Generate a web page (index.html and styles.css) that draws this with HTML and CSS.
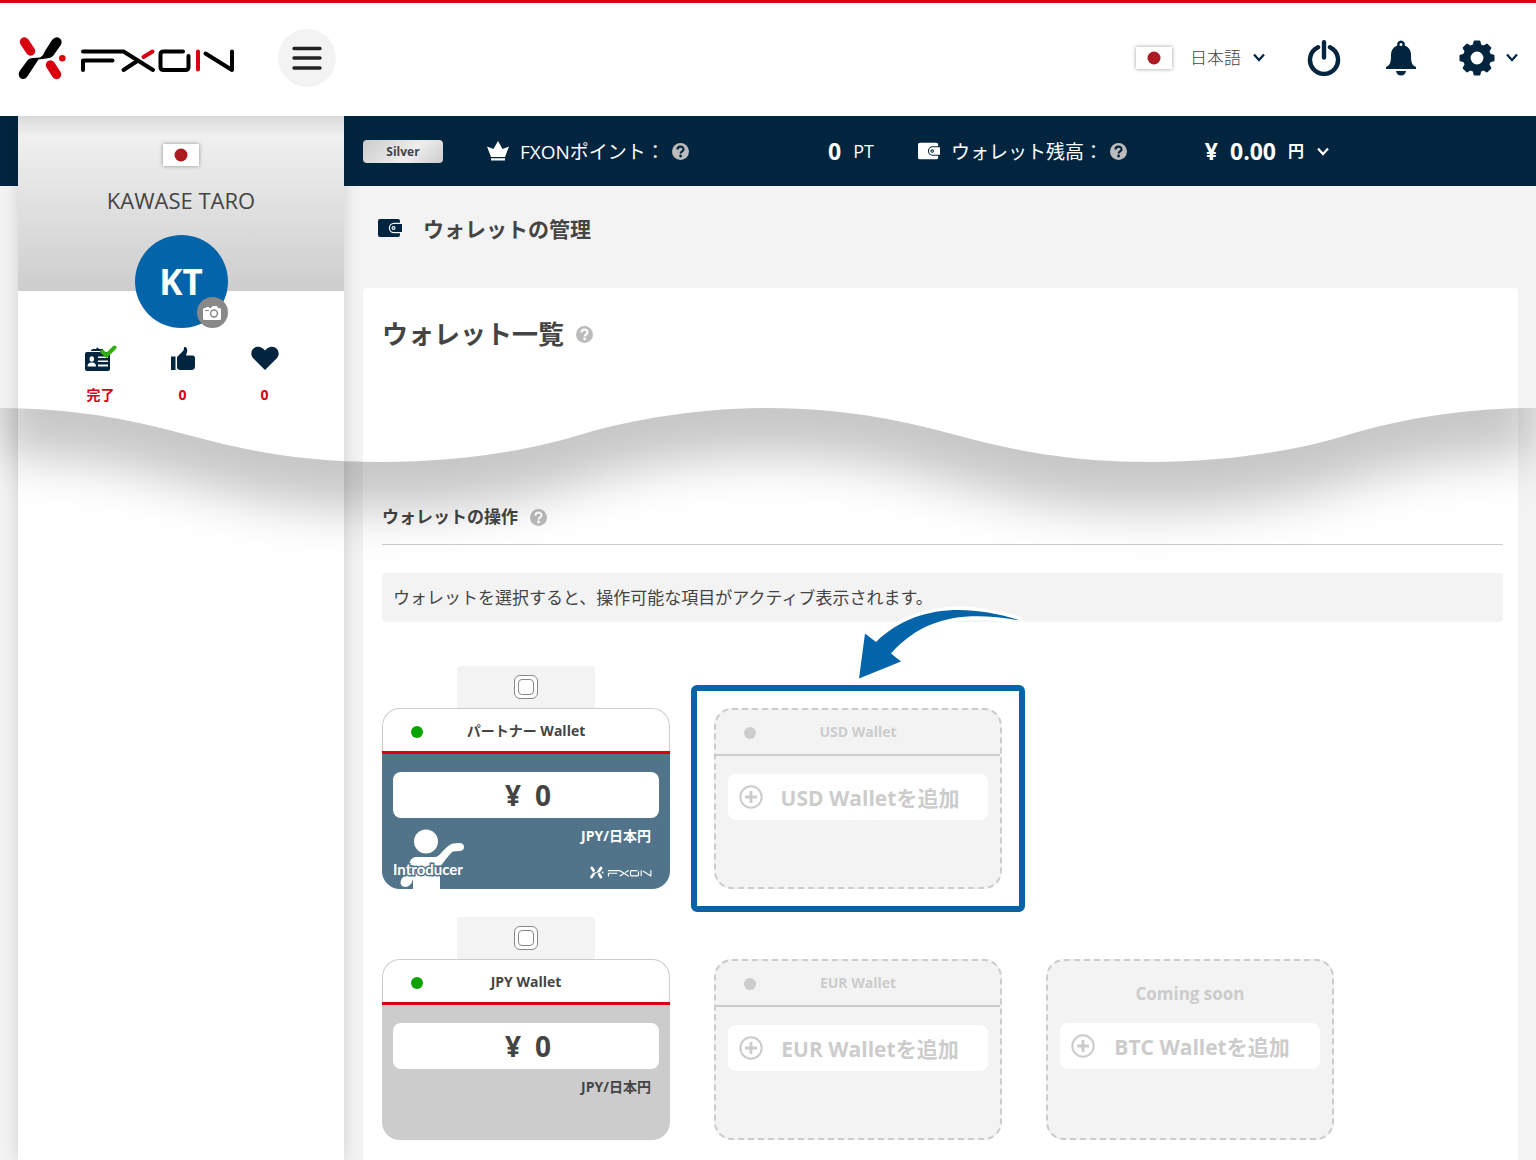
FILE: index.html
```html
<!DOCTYPE html>
<html lang="ja">
<head>
<meta charset="utf-8">
<meta name="viewport" content="width=device-width, initial-scale=1">
<title>ウォレットの管理 | FXON</title>
<link rel="stylesheet" href="styles.css">
</head>
<body>
<svg class="defs" width="0" height="0" aria-hidden="true">
  <symbol id="chevron" viewBox="0 0 12 9"><path d="M1 1.5 6 7 11 1.5" fill="none" stroke="currentColor" stroke-width="2.2"/></symbol>
  <symbol id="help" viewBox="0 0 17 17"><circle cx="8.500" cy="8.500" r="8.500" fill="currentColor"/><path d="M5.500 6.600C5.500 2.600 11.500 2.600 11.500 6.400 11.500 8.600 8.600 8.300 8.600 10.600" fill="none" stroke="var(--help-mark)" stroke-width="2.200"/><circle cx="8.600" cy="13" r="1.400" fill="var(--help-mark)"/></symbol>
  <symbol id="wallet" viewBox="0 0 24 18"><path d="M2 0H20Q22 0 22 2V3.800H16A5.200 5.200 0 0 0 16 14.200H22V16Q22 18 20 18H2Q0 18 0 16V2Q0 0 2 0Z" fill="currentColor"/><path d="M16 5H24V13H16A4 4 0 0 1 16 5Z" fill="currentColor"/><circle cx="15.500" cy="9" r="2" fill="var(--wallet-mark)"/><circle cx="15.500" cy="9" r="0.800" fill="currentColor"/></symbol>
  <symbol id="plus" viewBox="0 0 24 24"><circle cx="12" cy="12" r="10.700" fill="none" stroke="currentColor" stroke-width="2"/><path d="M12 6V18M6 12H18" stroke="currentColor" stroke-width="2.800"/></symbol>
  <symbol id="flag" viewBox="0 0 36 22"><path fill="#fff" d="M0 0H36V22H0Z"/><circle cx="18" cy="11" r="6.500" fill="#ad1a20"/></symbol>
  <symbol id="fxon" viewBox="18 36 218 44">
    <path d="M52 40Q56 35.500 60 38.500 63 41.500 60.500 45.500L53 56Q51 58 48 58.300L38.500 59.500 28 75.500Q25 80.500 21 78.500 17 75.500 20 70.500L27 61Q29 58 33 58L40 57.500Q43 56 45 51Z" fill="var(--logo-dark)"/>
    <g fill="none" stroke="var(--logo-accent)" stroke-linecap="round"><path d="M24.500 42 30.500 51M50.500 65 56.500 74.500" stroke-width="9.400"/><path d="M143.500 57 152.500 51.500M198 51.500V69.500" stroke-width="4"/></g>
    <circle cx="62.300" cy="58.200" r="3.300" fill="var(--logo-accent)"/>
    <path d="M83 51.500H123.500L153 70M83 70V60.500H112.500M123.500 70 138 60.500M183 51.500H163.500Q160.500 51.500 160.500 54.500V67Q160.500 70 163.500 70H185.500Q188.500 70 188.500 67V56M205.500 53.500 232 70V51.500" fill="none" stroke="var(--logo-dark)" stroke-width="4" stroke-linecap="round" stroke-linejoin="round"/>
  </symbol>
</svg>

<header class="topbar">
  <a class="logo" href="#" aria-label="FXON"><svg width="218" height="44"><use href="#fxon"/></svg></a>
  <button class="menu" type="button" aria-label="メニュー"><svg width="30" height="26" viewBox="0 0 30 26"><path d="M2 3.500H28M2 13H28M2 23H28" stroke="#222" stroke-width="3.400" stroke-linecap="round"/></svg></button>
  <div class="language">
    <svg class="flag" width="36" height="22"><use href="#flag"/></svg>
    <label class="pick"><select aria-label="言語"><option>日本語</option></select><svg width="12" height="9"><use href="#chevron"/></svg></label>
  </div>
  <button class="icon-button power" type="button" aria-label="ログアウト"><svg width="34" height="36" viewBox="0 0 34 36"><path d="M11 7.200A14 14 0 1 0 23 7.200M17 2.200V17.500" fill="none" stroke="currentColor" stroke-width="4.400" stroke-linecap="round"/></svg></button>
  <button class="icon-button bell" type="button" aria-label="お知らせ"><svg width="30" height="36" viewBox="0 0 30 36"><path fill-rule="evenodd" d="M15 0.500A4 4 0 0 1 18.800 5.500Q25 8 25 15C25 23 26 25 30 27V29H0V27C4 25 5 23 5 15Q5 8 11.200 5.500A4 4 0 0 1 15 0.500ZM15 3A1.500 1.500 0 1 0 15 6 1.500 1.500 0 0 0 15 3Z" fill="currentColor"/><path d="M10 31H20Q19 35.500 15 35.500T10 31Z" fill="currentColor"/></svg></button>
  <button class="icon-button settings" type="button" aria-label="設定"><svg width="36" height="36" viewBox="-18 -18 36 36"><circle r="10.200" fill="none" stroke="currentColor" stroke-width="7.600"/><g stroke="currentColor" stroke-linejoin="round"><path id="tooth" d="M-3.500 -12-2.400 -16.500H2.400L3.500 -12Z" fill="currentColor" stroke-width="2"/><use href="#tooth" transform="rotate(45)"/><use href="#tooth" transform="rotate(90)"/><use href="#tooth" transform="rotate(135)"/><use href="#tooth" transform="rotate(180)"/><use href="#tooth" transform="rotate(225)"/><use href="#tooth" transform="rotate(270)"/><use href="#tooth" transform="rotate(315)"/></g></svg><svg width="12" height="9"><use href="#chevron"/></svg></button>
</header>

<div class="page">
  <aside class="sidebar">
    <div class="profile">
      <svg class="flag" width="36" height="22"><use href="#flag"/></svg>
      <p class="name">KAWASE TARO</p>
      <div class="avatar">KT
        <button class="camera" type="button" aria-label="写真を変更"><svg width="18" height="14" viewBox="0 0 18 14"><path d="M1.500 2H3V1H6V2H8L9.500 0H14L15 2H16.500Q18 2 18 3.500V12.500Q18 14 16.500 14H1.500Q0 14 0 12.500V3.500Q0 2 1.500 2Z" fill="#fff"/><circle cx="11" cy="7.500" r="3.400" fill="none" stroke="#888" stroke-width="1.500"/><path d="M2 4.500H6" stroke="#888"/></svg></button>
      </div>
    </div>
    <ul class="stats">
      <li><svg width="32" height="28" viewBox="0 0 32 28"><path d="M2 7H23Q25 7 25 9V24Q25 26 23 26H2Q0 26 0 24V9Q0 7 2 7ZM6 5 8 4H11Q12.500 1 14 4H18V6H6Z" fill="#01253f"/><g fill="#fff"><ellipse cx="6.800" cy="14" rx="2.200" ry="2.700"/><path d="M2.500 21.500Q2.500 17.500 6.800 17.500T11 21.500ZM13 11.500H23V13H13ZM13 15.500H23V17H13ZM13 19.500H23V21.500H13Z"/></g><path d="M17 6.500 21.500 10.500 29.500 2.500" fill="none" stroke="#33ad11" stroke-width="4" stroke-linecap="round"/></svg><span>完了</span></li>
      <li><svg width="24" height="28" viewBox="0 0 24 28"><path d="M0 11.500H4.500V25H0ZM6 12 12 6Q13 5 13 2.500C15 1 17 4 16 7L15 10.500H21.500Q24 10.500 24 13V21.500Q24 25 20 25H9Q7 25 6 23Z" fill="#01253f"/></svg><span>0</span></li>
      <li><svg width="28" height="28" viewBox="0 0 28 28"><path d="M14 25 2 13C-3 7 4-2 12 3.500L14 5.500 16 3.500C24-2 31 7 26 13Z" fill="#01253f"/></svg><span>0</span></li>
    </ul>
  </aside>

  <main class="main">
    <section class="status">
      <span class="rank">Silver</span>
      <div class="status-group points">
        <svg class="crown" width="22" height="20" viewBox="0 0 22 20"><path d="M0 5.500 6.500 8 11 0 15.500 8 22 5.500 18 16H4ZM4 17.300H18V19.500H4Z" fill="currentColor"/></svg>
        <span class="status-label">FXONポイント：</span>
        <svg class="help" width="17" height="17"><use href="#help"/></svg>
        <span class="figure"><b>0</b><span class="unit">PT</span></span>
      </div>
      <div class="status-group balance">
        <svg class="wallet" width="22" height="18"><use href="#wallet"/></svg>
        <span class="status-label">ウォレット残高：</span>
        <svg class="help" width="17" height="17"><use href="#help"/></svg>
        <span class="figure"><b>¥</b><b>0.00</b><label class="pick"><select aria-label="通貨"><option>円</option></select><svg width="12" height="9"><use href="#chevron"/></svg></label></span>
      </div>
    </section>

    <h1 class="page-title"><svg width="24" height="18"><use href="#wallet"/></svg>ウォレットの管理</h1>

    <section class="panel">
      <h2 class="panel-title">ウォレット一覧<svg class="help" width="17" height="17"><use href="#help"/></svg></h2>
      <h3 class="section-title">ウォレットの操作<svg class="help" width="17" height="17"><use href="#help"/></svg></h3>
      <p class="notice">ウォレットを選択すると、操作可能な項目がアクティブ表示されます。</p>

      <div class="wallets">
        <article class="slot">
          <div class="tab"><input type="checkbox" id="pick-partner"></div>
          <div class="card partner">
            <label class="card-head" for="pick-partner">パートナー Wallet</label>
            <div class="card-body">
              <p class="amount"><span>¥</span><span>0</span></p>
              <p class="currency">JPY/日本円</p>
              <div class="card-foot">
                <svg width="72" height="60" viewBox="0 0 72 60" role="img" aria-label="Introducer"><circle cx="33" cy="12.500" r="12" fill="#fff"/><path d="M22 28H42Q45 28 49 23 56 15 60 14.500L66 14Q71 14 71 18T66 22L60 22.500Q58 23 47 38V60H20V50Q18 58 12 58 6 57 8 51 16 40 16 36 17 29 22 28Z" fill="#fff"/><text class="introducer" x="0" y="46">Introducer</text></svg>
                <svg class="mini-logo" width="62" height="13"><use href="#fxon"/></svg>
              </div>
            </div>
          </div>
        </article>
        <article class="slot">
          <div class="card ghost marked">
            <h4 class="card-head">USD Wallet</h4>
            <button class="add" type="button"><svg width="24" height="24"><use href="#plus"/></svg><span>USD Walletを追加</span></button>
            <svg class="arrow" width="180" height="88" viewBox="850 600 180 88" aria-hidden="true"><path d="M1020 620.500C965 603 913 606 876 642L865 633.500 859 678.500 901 661.500 891 653.500C925 616 965 611 1020 620.500Z" fill="#0464aa" stroke="#fff" stroke-width="7" stroke-linejoin="round" paint-order="stroke"/></svg>
          </div>
        </article>
      </div>

      <div class="wallets">
        <article class="slot">
          <div class="tab"><input type="checkbox" id="pick-jpy"></div>
          <div class="card jpy">
            <label class="card-head" for="pick-jpy">JPY Wallet</label>
            <div class="card-body">
              <p class="amount"><span>¥</span><span>0</span></p>
              <p class="currency">JPY/日本円</p>
            </div>
          </div>
        </article>
        <article class="slot">
          <div class="card ghost">
            <h4 class="card-head">EUR Wallet</h4>
            <button class="add" type="button"><svg width="24" height="24"><use href="#plus"/></svg><span>EUR Walletを追加</span></button>
          </div>
        </article>
        <article class="slot">
          <div class="card ghost soon">
            <h4 class="soon-title">Coming soon</h4>
            <button class="add" type="button"><svg width="24" height="24"><use href="#plus"/></svg><span>BTC Walletを追加</span></button>
          </div>
        </article>
      </div>
    </section>
  </main>

  <svg class="wave" viewBox="0 0 1536 200" preserveAspectRatio="none" aria-hidden="true">
    <defs>
      <clipPath id="below"><path d="M0 0C80 0 140 14 192 28S300 54 382 54C460 54 530 42 576 28S690 0 768 0C848 0 908 14 960 28S1068 54 1150 54C1228 54 1298 42 1344 28S1456 0 1536 0V200H0Z"/></clipPath>
      <filter id="soft" filterUnits="userSpaceOnUse" x="-100" y="-150" width="1736" height="450"><feGaussianBlur stdDeviation="24"/></filter>
    </defs>
    <g clip-path="url(#below)"><path filter="url(#soft)" transform="translate(0 48)" d="M0 0C80 0 140 14 192 28S300 54 382 54C460 54 530 42 576 28S690 0 768 0C848 0 908 14 960 28S1068 54 1150 54C1228 54 1298 42 1344 28S1456 0 1536 0V-120H0Z" fill="#000" fill-opacity="0.220"/></g>
  </svg>
</div>
</body>
</html>
```
FILE: styles.css
```css
:root {
  --navy: #01253f;
  --red: #d9000f;
  --blue: #0464aa;
  --text: #444;
  --muted: #ccc;
  --pale: #f3f3f3;
  --help-mark: #fff;
  --wallet-mark: #f3f3f3;
  --logo-dark: #000;
  --logo-accent: #d9000f;
}

* { box-sizing: border-box; }

body {
  margin: 0;
  min-height: 100vh;
  display: flex;
  flex-direction: column;
  color: var(--text);
  background: var(--pale);
  font-family: "Open Sans", "Noto Sans CJK JP", sans-serif;
  font-size: 17px;
}

h1, h2, h3, h4, p, ul { margin: 0; padding: 0; }
svg { display: block; flex: none; }
.defs { position: absolute; }

button, select {
  margin: 0;
  padding: 0;
  border: 0;
  background: none;
  color: inherit;
  font: inherit;
  cursor: pointer;
}

select { appearance: none; }

.topbar {
  display: flex;
  align-items: center;
  height: 116px;
  padding: 0 18px 4px;
  border-top: 3px solid var(--red);
  background: #fff;
  color: var(--navy);
}

.menu {
  display: grid;
  place-items: center;
  width: 58px;
  height: 58px;
  margin-left: 42px;
  border-radius: 50%;
  background: var(--pale);
}

.flag { box-shadow: 0 0 4px rgba(0, 0, 0, .4); }

.language {
  display: flex;
  align-items: center;
  gap: 18px;
  margin-left: auto;
}

.language select {
  color: var(--text);
  font-weight: 300;
}

.pick {
  display: flex;
  align-items: center;
  gap: 12px;
}

.icon-button {
  display: flex;
  align-items: center;
  gap: 11px;
}

.power { margin-left: 42px; }
.bell { margin-left: 45px; }
.settings { margin-left: 43px; }

.page {
  position: relative;
  flex: 1;
  display: grid;
  grid-template-columns: 326px minmax(0, 1fr);
  column-gap: 19px;
  padding: 0 18px;
  background: linear-gradient(var(--navy) 70px, var(--pale) 70px);
}

.sidebar {
  background: #fff;
  box-shadow: 0 0 16px rgba(0, 0, 0, .15);
  clip-path: inset(0 -20px);
}

.profile {
  display: flex;
  flex-direction: column;
  align-items: center;
  height: 175px;
  padding-top: 28px;
  background: linear-gradient(#dadada, #f0f0f0 20px, #cdcdcd);
}

.name {
  margin-top: 18px;
  font-size: 22px;
  line-height: 32px;
}

.avatar {
  position: relative;
  flex: none;
  width: 93px;
  height: 93px;
  margin-top: 19px;
  border-radius: 50%;
  background: var(--blue);
  color: #fff;
  font-size: 35px;
  font-weight: 700;
  line-height: 93px;
  text-align: center;
}

.camera {
  position: absolute;
  right: 0;
  bottom: 0;
  display: grid;
  place-items: center;
  width: 31px;
  height: 31px;
  border-radius: 50%;
  background: #888;
}

.stats {
  display: flex;
  justify-content: center;
  gap: 20px;
  padding-left: 3px;
  margin-top: 54px;
  list-style: none;
}

.stats li {
  display: flex;
  flex-direction: column;
  align-items: center;
  gap: 12px;
  width: 62px;
  color: var(--red);
  font-size: 14px;
  font-weight: 700;
  line-height: 20px;
}

.status {
  display: flex;
  align-items: center;
  height: 70px;
  color: #fff;
  --help-mark: var(--navy);
  --wallet-mark: var(--navy);
}

.rank {
  width: 80px;
  border-radius: 4px;
  background: linear-gradient(135deg, #ccc, #eee 60%, #ccc);
  color: var(--text);
  font-size: 12px;
  font-weight: 700;
  line-height: 23px;
  text-align: center;
}

.status-group {
  display: flex;
  align-items: center;
}

.points { width: 387px; margin-left: 44px; }
.balance { width: 411px; margin-left: 44px; }
.status-label { margin-left: 11px; font-size: 19px; }
.help { color: #bbb; }
.status .help { margin-left: 7px; }
.figure {
  display: flex;
  align-items: center;
  gap: 12px;
  margin-left: auto;
  font-size: 23px;
}
.unit { font-size: 18px; }
.figure select { font-size: 16px; font-weight: 700; }

.page-title {
  display: flex;
  align-items: center;
  gap: 21px;
  height: 102px;
  padding: 0 0 18px 15px;
  font-size: 21px;
  font-weight: 700;
}

.page-title svg { color: var(--navy); }

.panel {
  padding: 26px 15px 20px 19px;
  border-radius: 4px 4px 0 0;
  background: #fff;
}

.panel-title, .section-title {
  display: flex;
  align-items: center;
  gap: 12px;
  font-weight: 700;
}

.panel-title {
  font-size: 26px;
  line-height: 40px;
}

.section-title {
  margin-top: 151px;
  padding-bottom: 15px;
  border-bottom: 1px solid var(--muted);
  font-size: 17px;
  line-height: 24px;
}

.notice {
  margin: 28px 0 44px;
  padding: 0 11px;
  border-radius: 4px;
  background: var(--pale);
  line-height: 49px;
}

.wallets {
  display: flex;
  flex-wrap: wrap;
  align-items: flex-end;
  gap: 28px 44px;
}

.wallets + .wallets { margin-top: 28px; }

.slot { width: 288px; }

.tab {
  display: grid;
  place-items: center;
  width: 138px;
  height: 42px;
  margin: 0 auto;
  border-radius: 4px 4px 0 0;
  background: var(--pale);
}

.tab input {
  appearance: none;
  display: grid;
  place-items: center;
  width: 24px;
  height: 24px;
  margin: 0;
  border: 1px solid #888;
  border-radius: 6px;
  background: #fff;
}

.tab input::before {
  content: "";
  width: 14px;
  height: 14px;
  border: 1px solid #888;
  border-radius: 4px;
}

.card {
  position: relative;
  height: 181px;
  border-radius: 18px;
}

.card-head {
  position: relative;
  display: block;
  height: 43px;
  border: 1px solid var(--muted);
  border-bottom: 0;
  border-radius: 18px 18px 0 0;
  background: #fff;
  font-size: 14px;
  font-weight: 700;
  line-height: 44px;
  text-align: center;
}

.card-head::before {
  content: "";
  position: absolute;
  left: 28px;
  top: 17px;
  width: 12px;
  height: 12px;
  border-radius: 50%;
  background: #0aa300;
}

.card-body {
  height: 138px;
  padding: 18px 11px 0;
  border-top: 3px solid var(--red);
  border-radius: 0 0 18px 18px;
}

.partner .card-body { background: #51748b; }
.jpy .card-body { background: var(--muted); }

.amount {
  display: flex;
  justify-content: center;
  gap: 14px;
  height: 46px;
  padding-left: 4px;
  border-radius: 8px;
  background: #fff;
  font-size: 28px;
  font-weight: 700;
  line-height: 46px;
}

.currency {
  padding: 8px 8px 0 0;
  font-size: 14px;
  font-weight: 700;
  line-height: 20px;
  text-align: right;
}

.partner .currency { color: #fff; }

.card-foot {
  display: flex;
  justify-content: space-between;
  align-items: flex-end;
  margin-top: -17px;
  padding-right: 7px;
}

.introducer {
  fill: #fff;
  stroke: #51748b;
  stroke-width: 3px;
  paint-order: stroke;
  font-family: Lato, sans-serif;
  font-size: 15px;
  font-weight: 700;
}

.mini-logo {
  margin-bottom: 10px;
  --logo-dark: #fff;
  --logo-accent: #fff;
}

.ghost {
  padding: 0 12px;
  border: 2px dashed var(--muted);
  background: var(--pale);
  color: var(--muted);
}

.ghost .card-head {
  height: 46px;
  margin: 0 -12px 18px;
  border: 0;
  border-bottom: 2px solid var(--muted);
  border-radius: 0;
  background: none;
}

.ghost .card-head::before { background: var(--muted); }

.add {
  display: flex;
  align-items: center;
  width: 100%;
  height: 46px;
  padding: 0 11px;
  border-radius: 8px;
  background: #fff;
  font-size: 21px;
  font-weight: 700;
}

.add span { flex: 1; text-align: center; }

.soon-title {
  padding-top: 21px;
  margin-bottom: 17px;
  font-size: 17px;
  font-weight: 700;
  line-height: 24px;
}

.soon { text-align: center; }

.marked::after {
  content: "";
  position: absolute;
  inset: -25px;
  border: 6px solid var(--blue);
  border-radius: 6px;
  pointer-events: none;
}

.arrow {
  position: absolute;
  left: 134px;
  top: -110px;
  pointer-events: none;
}

.wave {
  position: absolute;
  left: 0;
  top: 292px;
  width: 100%;
  height: 200px;
  pointer-events: none;
}
```
